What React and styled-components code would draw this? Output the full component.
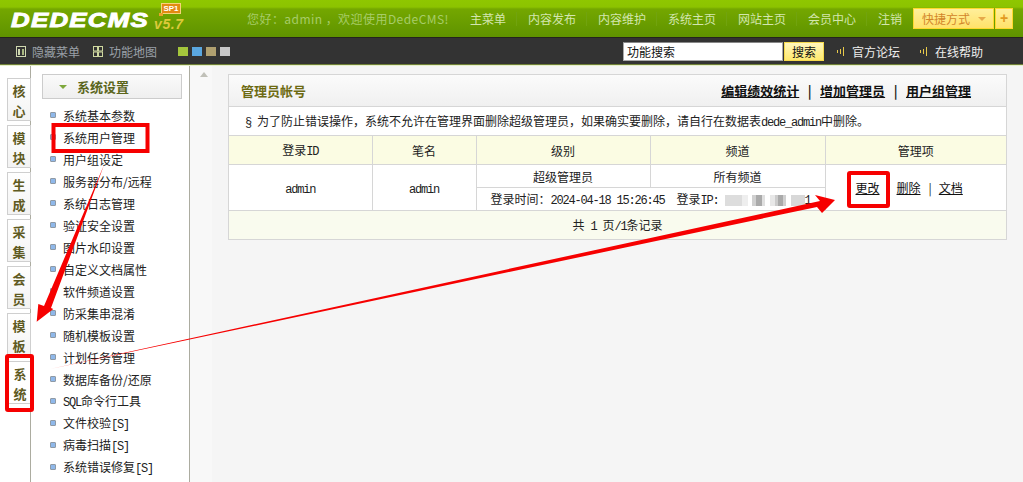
import React from 'react';
import styled, { createGlobalStyle } from 'styled-components';

const GlobalStyle = createGlobalStyle`
    html, body {
        margin: 0;
        padding: 0;
        background: #f5f5f5;
        font-family: "Noto Sans CJK SC", "Liberation Sans", sans-serif;
        font-size: 12px;
        color: #222;
    }
`;

const Page = styled.div`
    position: relative;
    display: flex;
    flex-direction: column;
    height: 482px;
    overflow: hidden;
`;

const TopBar = styled.div`
    display: flex;
    align-items: center;
    height: 37px;
    flex: none;
    background: linear-gradient(#8fc700 0, #8cc300 7px, #74a700 9px, #5f9300 37px);
`;

const LogoBox = styled.div`
    position: relative;
    width: 247px;
    height: 37px;
    flex: none;
`;

const LogoText = styled.span`
    position: absolute;
    left: 11px;
    top: 5px;
    font: italic 900 20px/30px "Liberation Sans", sans-serif;
    letter-spacing: 1px;
    color: #fff;
    -webkit-text-stroke: 0.9px #fff;
    transform: scaleX(1.29);
    transform-origin: left;
`;

const LogoVersion = styled.span`
    position: absolute;
    left: 154px;
    top: 15px;
    font: italic 700 14px/18px "Liberation Sans", sans-serif;
    letter-spacing: 0.6px;
    color: #dcc93a;
`;

const SpBadge = styled.span`
    position: absolute;
    left: 161px;
    top: 3px;
    width: 18px;
    height: 9px;
    border: 1px solid #f7d27a;
    background: #e28a12;
    font: 700 8px/9px "Liberation Sans", sans-serif;
    text-align: center;
    color: #fff;
    &::after {
        content: '';
        position: absolute;
        left: -3px;
        bottom: -3px;
        width: 4px;
        height: 3px;
        background: #e8a22a;
    }
`;

const Welcome = styled.div`
    width: 212px;
    flex: none;
    color: #a7cc68;
    font-size: 12px;
    line-height: 37px;
    letter-spacing: 0.45px;
    white-space: nowrap;
`;

const NavItem = styled.a`
    padding: 0 11px;
    color: #d3e6ae;
    line-height: 14px;
    white-space: nowrap;
    border-left: ${(p) => (p.$first ? 'none' : '1px solid #71a30f')};
    margin-left: ${(p) => (p.$first ? '0' : '-1px')};
`;

const Shortcut = styled.div`
    display: flex;
    height: 21px;
    flex: none;
`;

const ShortcutMain = styled.div`
    display: flex;
    align-items: center;
    gap: 8px;
    width: 71px;
    padding-left: 8px;
    background: linear-gradient(#ffef9a, #ffe26a);
    border: 1px solid #ffd92e;
    color: #d2852a;
    height: 19px;
`;

const ShortcutCaret = styled.i`
    width: 0;
    height: 0;
    border: 4px solid transparent;
    border-top: 4px solid #e6a94a;
    border-bottom: none;
`;

const ShortcutAdd = styled.div`
    width: 16px;
    height: 19px;
    margin-left: 1px;
    background: linear-gradient(#ffef9a, #ffe26a);
    border: 1px solid #ffd92e;
    color: #e29a20;
    font: 700 14px/18px "Liberation Sans", sans-serif;
    text-align: center;
`;

const SubBar = styled.div`
    display: flex;
    align-items: center;
    flex: none;
    height: 24px;
    padding: 1px 0 1px 16px;
    background: #333;
    border-top: 1px solid #24241e;
    border-bottom: 1px solid #6f7f37;
    box-shadow: 0 1px 0 #e6efcb;
    color: #9aa0a8;
    position: relative;
`;

const SubLink = styled.span`
    display: flex;
    align-items: center;
    gap: 6px;
    margin-right: ${(p) => p.$gap}px;
`;

const Swatches = styled.div`
    display: flex;
    gap: 4px;
    margin-left: 8px;
    width: 445px;
`;

const Swatch = styled.i`
    width: 10px;
    height: 9px;
    background: ${(p) => p.$color};
`;

const SearchInput = styled.div`
    width: 155px;
    height: 17px;
    padding-left: 3px;
    border: 1px solid #aaa;
    border-top-color: #888;
    background: #fff;
    color: #111;
    line-height: 17px;
`;

const SearchButton = styled.div`
    width: 38px;
    height: 17px;
    margin-left: 1px;
    margin-right: 13px;
    border: 1px solid #f5d94c;
    background: linear-gradient(#fff6bd, #ffe96e);
    color: #111;
    text-align: center;
    line-height: 17px;
`;

const HelpLink = styled.span`
    display: flex;
    align-items: center;
    gap: 7px;
    margin-right: 20px;
    color: #eee;
`;

const Body = styled.div`
    display: flex;
    flex: 1;
    min-height: 0;
`;

const Tabs = styled.div`
    display: flex;
    flex-direction: column;
    gap: 4px;
    width: 23px;
    padding: 13px 0 0 7px;
    flex: none;
    background: #fff;
`;

const Tab = styled.div`
    width: 22px;
    height: 39px;
    padding-top: 2px;
    text-align: center;
    font-size: 13px;
    font-weight: 700;
    line-height: 20px;
    color: #5f5a22;
    background: ${(p) => (p.$active ? '#fff' : 'linear-gradient(#fff, #f3f3f3)')};
    border: 1px solid #cfcfcf;
    border-right: ${(p) => (p.$active ? 'none' : '1px solid #cfcfcf')};
    border-left: ${(p) => (p.$active ? '2px solid #bcd68a' : '1px solid #cfcfcf')};
    margin-top: ${(p) => (p.$active ? '1px' : '0')};
    position: relative;
    z-index: 1;
`;

const Menu = styled.div`
    width: 158px;
    flex: none;
    background: #fff;
    border-left: 1px solid #acaca0;
    border-right: 1px solid #acaca0;
    padding-top: 9px;
`;

const MenuHeader = styled.div`
    display: flex;
    align-items: center;
    height: 23px;
    margin: 0 7px 0 11px;
    padding-left: 16px;
    gap: 10px;
    border: 1px solid #ccc;
    background: linear-gradient(#fafafa, #efefef);
    color: #5c661c;
    font-size: 13px;
    font-weight: 700;
`;

const HeaderCaret = styled.i`
    width: 0;
    height: 0;
    border: 4px solid transparent;
    border-top: 4px solid #7ea83c;
    border-bottom: none;
`;

const MenuList = styled.div`
    padding: 5px 0 0 19px;
`;

const MenuRow = styled.div`
    display: flex;
    align-items: center;
    gap: 7px;
    height: 22px;
    color: #222;
    white-space: nowrap;
`;

const Bullet = styled.i`
    width: 6px;
    height: 6px;
    border-radius: 1px;
    background: #8fb8ea;
    border: 1px solid #8f9aa5;
    box-sizing: border-box;
`;

const ScrollGutter = styled.div`
    width: 22px;
    flex: none;
    background: #f8f8f8;
    padding: 7px 0 0 10px;
    box-sizing: border-box;
`;

const ScrollArrow = styled.i`
    display: block;
    width: 0;
    height: 0;
    border: 4px solid transparent;
    border-bottom: 5px solid #c0c0b8;
    border-top: none;
`;

const Main = styled.div`
    flex: 1;
    padding: 9px 16px 0;
    background: #f5f5f5;
`;

const Panel = styled.div`
    border: 1px solid #d6d6d6;
    background: #fff;
`;

const PanelTitle = styled.div`
    display: flex;
    align-items: center;
    justify-content: space-between;
    height: 31px;
    padding: 0 35px 0 12px;
    background: linear-gradient(#fbfbfb, #f0f0f0);
    border-bottom: 1px solid #d6d6d6;
`;

const TitleText = styled.span`
    font-size: 13px;
    font-weight: 700;
    color: #6d6a12;
`;

const TitleLinks = styled.div`
    display: flex;
    align-items: center;
    gap: 8.5px;
    font-size: 13px;
    font-weight: 700;
    color: #222;
`;

const TitleLink = styled.a`
    text-decoration: underline;
    color: #111;
`;

const Notice = styled.div`
    height: 28px;
    padding-left: 16px;
    line-height: 28px;
    border-bottom: 1px solid #d6d6d6;
    white-space: nowrap;
`;

const Mono = styled.span`
    font-family: "Liberation Mono", monospace;
    font-size: 12px;
    letter-spacing: -1.2px;
`;

const Table = styled.table`
    width: 100%;
    table-layout: fixed;
    border-collapse: collapse;
`;

const Cell = styled.td`
    padding: 0;
    height: ${(p) => p.$height}px;
    text-align: center;
    white-space: nowrap;
    border: 1px solid #d6d6d6;
    border-top: none;
    background: ${(p) => p.$bg || '#fff'};
    &:first-child { border-left: none; }
    &:last-child { border-right: none; }
`;

const FootCell = styled(Cell)`
    border-bottom: none;
`;

const Actions = styled.div`
    display: flex;
    align-items: center;
    padding-left: 30px;
`;

const Action = styled.a`
    text-decoration: underline;
    color: #111;
    margin-left: ${(p) => p.$gap || 0}px;
`;

const ActionSep = styled.span`
    margin-left: 8px;
`;

const LoginLine = styled.div`
    display: flex;
    align-items: center;
    justify-content: center;
    gap: 12px;
`;

const BlurredIp = styled.span`
    display: inline-block;
    width: 80px;
    height: 11px;
    margin-left: 6px;
    vertical-align: -2px;
    background: linear-gradient(90deg, #ddd 0 21%, #eee 21% 29%, #fff 29% 34%, #d0d0d0 34% 39%, #aaa 39% 46%, #e0e0e0 46% 50%, #fff 50% 56%, #e8e8e8 56% 62%, #ccc 62% 66%, #aaa 66% 72%, #d0d0d0 72% 76%, #fff 76% 82%, #d8d8d8 82% 100%);
`;

const Annotation = styled.svg`
    position: absolute;
    left: 0;
    top: 0;
    pointer-events: none;
    z-index: 5;
`;

const tabs = [['核', '心'], ['模', '块'], ['生', '成'], ['采', '集'], ['会', '员'], ['模', '板'], ['系', '统']];

const navItems = ['内容发布', '内容维护', '系统主页', '网站主页', '会员中心', '注销'];

const menuItems = [
    '系统基本参数', '系统用户管理', '用户组设定', '服务器分布/远程', '系统日志管理', '验证安全设置',
    '图片水印设置', '自定义文档属性', '软件频道设置', '防采集串混淆', '随机模板设置', '计划任务管理',
    '数据库备份/还原', <><Mono>SQL</Mono>命令行工具</>, <>文件校验<Mono>[S]</Mono></>,
    <>病毒扫描<Mono>[S]</Mono></>, <>系统错误修复<Mono>[S]</Mono></>
];

const Signal = () => (
    <svg width="8" height="9" viewBox="0 0 8 9">
        <path d="M0 3h1v3H0zM3 2h1v5H3zM6 0h1v9H6z" fill="#e8c94a" />
    </svg>
);

const PanelIcon = () => (
    <svg width="10" height="11" viewBox="0 0 10 11">
        <rect x="0.5" y="0.5" width="9" height="10" fill="#333" stroke="#cfd8b0" />
        <rect x="2" y="3" width="2" height="6" fill="#cfd8b0" />
        <rect x="6" y="3" width="2" height="6" fill="#a9b880" />
    </svg>
);

const GridIcon = () => (
    <svg width="10" height="11" viewBox="0 0 10 11" fill="none" stroke="#cfd8a0">
        <rect x="0.5" y="0.5" width="4" height="4.5" />
        <rect x="5.5" y="0.5" width="4" height="4.5" />
        <rect x="0.5" y="6" width="4" height="4.5" />
        <rect x="5.5" y="6" width="4" height="4.5" />
    </svg>
);

const App = () => (
    <Page>
        <GlobalStyle />
        <TopBar>
            <LogoBox>
                <LogoText>DEDECMS</LogoText>
                <LogoVersion>v5.7</LogoVersion>
                <SpBadge>SP1</SpBadge>
            </LogoBox>
            <Welcome>您好：admin ，欢迎使用DedeCMS!</Welcome>
            <NavItem $first>主菜单</NavItem>
            {navItems.map((item) => (
                <NavItem key={item}>{item}</NavItem>
            ))}
            <Shortcut>
                <ShortcutMain>快捷方式<ShortcutCaret /></ShortcutMain>
                <ShortcutAdd>+</ShortcutAdd>
            </Shortcut>
        </TopBar>
        <SubBar>
            <SubLink $gap={13}><PanelIcon />隐藏菜单</SubLink>
            <SubLink $gap={13}><GridIcon />功能地图</SubLink>
            <Swatches>
                <Swatch $color="#a4c63c" />
                <Swatch $color="#5aa7e0" />
                <Swatch $color="#b0a070" />
                <Swatch $color="#c8c8c8" />
            </Swatches>
            <SearchInput>功能搜索</SearchInput>
            <SearchButton>搜索</SearchButton>
            <HelpLink><Signal />官方论坛</HelpLink>
            <HelpLink><Signal />在线帮助</HelpLink>
        </SubBar>
        <Body>
            <Tabs>
                {tabs.map(([a, b], i) => (
                    <Tab key={a + b} $active={i === tabs.length - 1}>{a}<br />{b}</Tab>
                ))}
            </Tabs>
            <Menu>
                <MenuHeader><HeaderCaret />系统设置</MenuHeader>
                <MenuList>
                    {menuItems.map((item, i) => (
                        <MenuRow key={i}><Bullet /><span>{item}</span></MenuRow>
                    ))}
                </MenuList>
            </Menu>
            <ScrollGutter><ScrollArrow /></ScrollGutter>
            <Main>
                <Panel>
                    <PanelTitle>
                        <TitleText>管理员帐号</TitleText>
                        <TitleLinks>
                            <TitleLink>编辑绩效统计</TitleLink>|
                            <TitleLink>增加管理员</TitleLink>|
                            <TitleLink>用户组管理</TitleLink>
                        </TitleLinks>
                    </PanelTitle>
                    <Notice><Mono>§ </Mono>为了防止错误操作，系统不允许在管理界面删除超级管理员，如果确实要删除，请自行在数据表<Mono>dede_admin</Mono>中删除。</Notice>
                    <Table>
                        <colgroup>
                            <col width="143" />
                            <col width="104" />
                            <col width="174" />
                            <col width="175" />
                            <col width="181" />
                        </colgroup>
                        <tbody>
                            <tr>
                                <Cell $height={28} $bg="#fbfce3">登录<Mono>ID</Mono></Cell>
                                <Cell $bg="#fbfce3">笔名</Cell>
                                <Cell $bg="#fbfce3">级别</Cell>
                                <Cell $bg="#fbfce3">频道</Cell>
                                <Cell $bg="#fbfce3">管理项</Cell>
                            </tr>
                            <tr>
                                <Cell rowSpan={2}><Mono>admin</Mono></Cell>
                                <Cell rowSpan={2}><Mono>admin</Mono></Cell>
                                <Cell $height={22}>超级管理员</Cell>
                                <Cell>所有频道</Cell>
                                <Cell rowSpan={2}>
                                    <Actions>
                                        <Action>更改</Action>
                                        <Action $gap={17}>删除</Action>
                                        <ActionSep>|</ActionSep>
                                        <Action $gap={7}>文档</Action>
                                    </Actions>
                                </Cell>
                            </tr>
                            <tr>
                                <Cell colSpan={2} $height={22}>
                                    <LoginLine>
                                        <span>登录时间：<Mono>2024-04-18 15:26:45</Mono></span>
                                        <span>登录<Mono>IP:</Mono><BlurredIp /><Mono>1</Mono></span>
                                    </LoginLine>
                                </Cell>
                            </tr>
                            <tr>
                                <FootCell colSpan={5} $height={28} $bg="#f9fbee">共<Mono> 1 </Mono>页<Mono>/1</Mono>条记录</FootCell>
                            </tr>
                        </tbody>
                    </Table>
                </Panel>
            </Main>
        </Body>
        <Annotation width="1023" height="482" viewBox="0 0 1023 482" fill="none">
            <rect x="53.5" y="125" width="94" height="26" stroke="#f60000" strokeWidth="4" />
            <rect x="7" y="356" width="25" height="54" rx="1" stroke="#f60000" strokeWidth="4" />
            <rect x="849" y="173" width="39" height="33" rx="1" stroke="#f60000" strokeWidth="4" />
            <polygon points="36.7,321.7 38.3,304 44,306 104,165 51,308 53.3,309" fill="#f60000" />
            <polygon points="835,200 815,195 820,201 50,369 817,207 822,213" fill="#f60000" />
        </Annotation>
    </Page>
);

export default App;
